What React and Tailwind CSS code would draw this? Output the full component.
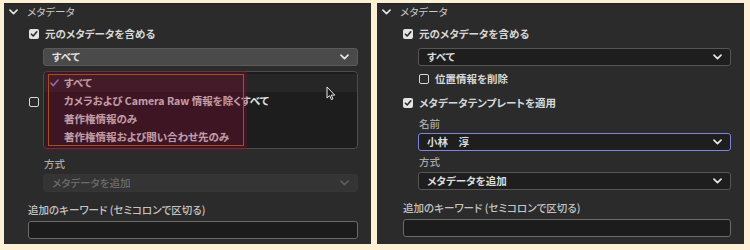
import React from 'react';

const jp = { fontFamily: '"Noto Sans CJK JP", "Noto Sans", sans-serif' };

// Small chevron used in the section header and dropdowns
const Chevron = ({ className = '' }) => (
    <svg width="9" height="6" viewBox="0 0 9 6" className={className}>
        <path d="M1 1.2 L4.5 4.6 L8 1.2" fill="none" stroke="currentColor" strokeWidth="1.7" strokeLinecap="round" strokeLinejoin="round" />
    </svg>
);

const CheckBox = ({ checked }) =>
    checked ? (
        <span className="w-[10px] h-[10px] rounded-[2px] bg-[#e4e4e4] flex items-center justify-center shrink-0">
            <svg width="8" height="8" viewBox="0 0 8 8">
                <path d="M1.4 4.2 L3.2 6 L6.8 1.8" fill="none" stroke="#2b2b2b" strokeWidth="1.6" strokeLinecap="round" strokeLinejoin="round" />
            </svg>
        </span>
    ) : (
        <span className="w-[10px] h-[10px] rounded-[2px] border-[1.5px] border-[#d8d8d8] shrink-0" />
    );

const CheckRow = ({ checked, label, className = '' }) => (
    <div className={`flex items-center gap-[6px] h-[16px] ${className}`}>
        <CheckBox checked={checked} />
        {label && <span className="text-[10.5px] font-semibold text-[#d8d8d8]">{label}</span>}
    </div>
);

const Select = ({ value, variant = 'dark', className = '' }) => {
    const styles = {
        dark: 'bg-[#1e1e1e] border border-[#565656] text-[#dcdcdc]',
        open: 'bg-[#4a4a4a] border border-[#5a5a5a] text-[#e2e2e2]',
        focus: 'bg-[#1e1e1e] border-[1.5px] border-[#7c84dc] text-[#dcdcdc]',
        disabled: 'bg-[#343434] border border-[#363636] text-[#6c6c6c]',
    };
    return (
        <div className={`h-[18px] rounded-[3px] flex items-center justify-between pl-[8px] pr-[8px] ${styles[variant]} ${className}`}>
            <span className={`text-[10.5px] leading-none ${variant === 'disabled' ? 'font-medium' : 'font-semibold'}`}>{value}</span>
            <Chevron className={variant === 'disabled' ? 'text-[#5c5c5c]' : 'text-[#e6e6e6]'} />
        </div>
    );
};

const Header = () => (
    <div className="flex items-center h-[16px] pl-[5px] gap-[9px]">
        <Chevron className="text-[#e0e0e0]" />
        <span className="text-[10.5px] text-[#c8c8c8]">メタデータ</span>
    </div>
);

const Label = ({ children }) => (
    <div className="h-[16px] ml-[16px] flex items-center text-[10.5px] font-medium text-[#a8a8a8]">{children}</div>
);

const Keywords = () => (
    <>
        <div className="h-[16px] mt-[10px] flex items-center text-[10.5px] font-medium text-[#c4c4c4]">追加のキーワード (セミコロンで区切る)</div>
        <div className="h-[18px] mt-[3px] mr-[13px] rounded-[3px] bg-[#1c1c1c] border border-[#6a6a6a]" />
    </>
);

const Cursor = () => (
    <svg width="10" height="15" viewBox="0 0 10 15" className="absolute left-[322px] top-[82px]">
        <path d="M1 1 L1 12 L3.6 9.6 L5.4 13.6 L7 12.9 L5.3 9.1 L8.8 9.1 Z" fill="#1a1a1a" stroke="#e8e8e8" strokeWidth="1" strokeLinejoin="round" />
    </svg>
);

const LeftPanel = () => {
    const items = ['すべて', 'カメラおよび Camera Raw 情報を除くすべて', '著作権情報のみ', '著作権情報および問い合わせ先のみ'];
    return (
        <div className="relative w-[367px] h-[241px] bg-[#2b2b2b] border-t border-[#242424] flex flex-col pl-[25px]">
            <div className="-ml-[25px]"><Header /></div>
            <CheckRow checked label="元のメタデータを含める" className="mt-[6px]" />
            <Select value="すべて" variant="open" className="mt-[6px] ml-[14px] mr-[13px]" />
            {/* template checkbox; its label sits under the open menu */}
            <CheckRow className="mt-[28px]" />
            <div className="mt-[46px] -ml-[1px]"><Label>方式</Label></div>
            <Select value="メタデータを追加" variant="disabled" className="mt-[2px] ml-[14px] mr-[13px]" />
            <div className="-ml-[1px]"><Keywords /></div>

            {/* open dropdown menu */}
            <div className="absolute left-[39px] top-[67px] w-[315px] h-[78px] rounded-[4px] bg-[#1d1d1d] border border-[#4c4c4c] flex flex-col py-[2px]">
                {items.map((t, i) => (
                    <div key={t} className={`h-[18.5px] flex items-center pl-[20px] relative ${i === 0 ? 'bg-[#262626]' : ''}`}>
                        {i === 0 && (
                            <svg width="9" height="8" viewBox="0 0 9 8" className="absolute left-[6px]">
                                <path d="M1 4.2 L3.3 6.6 L8 1" fill="none" stroke="#a98cf0" strokeWidth="1.6" strokeLinecap="round" strokeLinejoin="round" />
                            </svg>
                        )}
                        <span className="text-[10.5px] text-[#e4e4e4] font-semibold">{t}</span>
                    </div>
                ))}
            </div>

            {/* annotation highlight */}
            <div className="absolute left-[41px] top-[67px] w-[202px] h-[80px] bg-[rgba(130,10,50,0.33)] pointer-events-none">
                <div className="absolute left-[3px] top-[3px] right-[3px] bottom-[5px] border border-[#a2521e]" />
            </div>

            <Cursor />
        </div>
    );
};

const RightPanel = () => (
    <div className="w-[367px] h-[241px] bg-[#2b2b2b] border-t border-[#242424] flex flex-col pl-[26px]">
        <div className="-ml-[26px]"><Header /></div>
        <CheckRow checked label="元のメタデータを含める" className="mt-[6px]" />
        <Select value="すべて" className="mt-[6px] ml-[15px] mr-[13px]" />
        <CheckRow label="位置情報を削除" className="mt-[5px] ml-[16px]" />
        <CheckRow checked label="メタデータテンプレートを適用" className="mt-[8px]" />
        <div className="mt-[5px]"><Label>名前</Label></div>
        <Select value="小林　淳" variant="focus" className="mt-[1px] ml-[15px] mr-[13px]" />
        <div className="mt-[3px]"><Label>方式</Label></div>
        <Select value="メタデータを追加" className="mt-[2px] ml-[15px] mr-[13px]" />
        <Keywords />
    </div>
);

export default function App() {
    return (
        <div className="w-[750px] h-[250px] bg-[#fcf1d5] pt-[3px] pl-[4px] flex gap-[6px] [font-feature-settings:'palt']" style={jp}>
            <LeftPanel />
            <RightPanel />
        </div>
    );
}
